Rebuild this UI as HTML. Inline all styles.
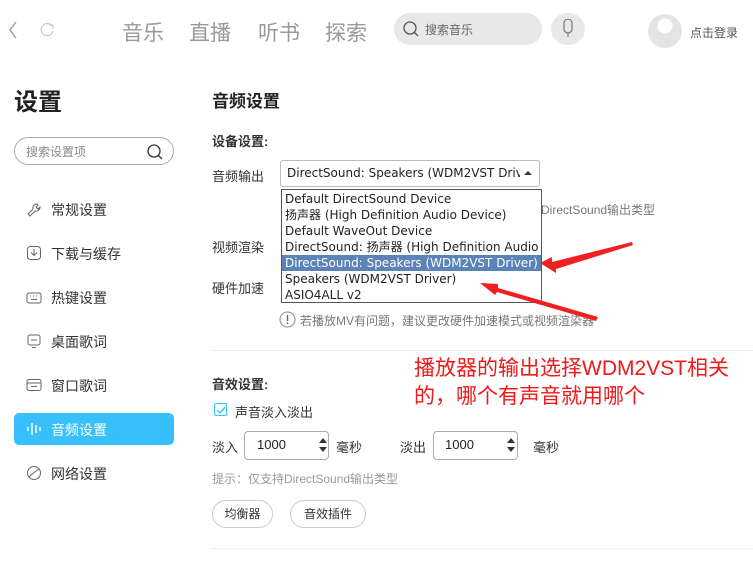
<!DOCTYPE html>
<html><head><meta charset="utf-8"><style>
*{margin:0;padding:0;box-sizing:border-box}
body{width:753px;height:573px;background:#fff;position:relative;overflow:hidden;font-family:"Liberation Sans","Noto Sans CJK SC",sans-serif;color:#333}
.a{position:absolute;white-space:nowrap}
.nav{font-size:21px;color:#999;top:17px}
.menu{left:51px;font-size:14px;color:#333}
.ic{left:26px;width:16px;height:16px}
.lbl{font-size:13px;color:#333}
.dd div{height:16px;line-height:16px;padding-left:3px;font-size:12px;color:#222;font-family:"DejaVu Sans","Noto Sans CJK SC",sans-serif;overflow:hidden}
</style></head><body>
<svg class="a" style="left:6px;top:20px" width="14" height="20"><path d="M10 2 L4 10 L10 18" stroke="#999" fill="none" stroke-width="1.3"/></svg>
<svg class="a" style="left:38px;top:21px" width="18" height="18"><path d="M14 5 A6 6 0 1 0 15 10" stroke="#ccc" fill="none" stroke-width="1.3"/><path d="M11 4 L15 4 L15 8" stroke="#ccc" fill="none" stroke-width="1.3"/></svg>
<div class="a nav" style="left:122px">音乐</div>
<div class="a nav" style="left:189px">直播</div>
<div class="a nav" style="left:258px">听书</div>
<div class="a nav" style="left:325px">探索</div>
<div class="a" style="left:394px;top:13px;width:148px;height:32px;border-radius:16px;background:#e8e8e8"></div>
<svg class="a" style="left:402px;top:20px" width="18" height="18"><circle cx="8" cy="8" r="6" stroke="#555" fill="none" stroke-width="1.3"/><path d="M12 12 L16 16" stroke="#555" stroke-width="1.3"/></svg>
<div class="a" style="left:425px;top:21px;font-size:12px;color:#666">搜索音乐</div>
<div class="a" style="left:551px;top:13px;width:34px;height:32px;border-radius:16px;background:#e8e8e8"></div>
<svg class="a" style="left:560px;top:19px" width="16" height="20"><path d="M4 4 a4 4 0 0 1 8 0 v6 a4 4 0 0 1 -8 0 z" stroke="#777" fill="none" stroke-width="1.2"/><path d="M8 14 v4" stroke="#777"/></svg>
<div class="a" style="left:648px;top:14px;width:34px;height:34px;border-radius:50%;background:radial-gradient(circle at 50% 35%,#fff 0 7px,#e4e4e4 8px)"></div>
<div class="a" style="left:690px;top:24px;font-size:12px;color:#555">点击登录</div>
<div class="a" style="left:14px;top:82px;font-size:24px;font-weight:bold;color:#222">设置</div>
<div class="a" style="left:14px;top:137px;width:160px;height:28px;border:1px solid #aaa;border-radius:14px"></div>
<div class="a" style="left:26px;top:143px;font-size:12px;color:#888">搜索设置项</div>
<svg class="a" style="left:146px;top:143px" width="18" height="18"><circle cx="8" cy="8" r="6" stroke="#333" fill="none" stroke-width="1.3"/><path d="M12 12 L16 16" stroke="#333" stroke-width="1.3"/></svg>
<svg class="a ic" style="top:202px" viewBox="0 0 16 16"><path d="M11 2 a4 4 0 0 0 -4 5 L2 12 L4 14 L9 9 a4 4 0 0 0 5 -4 L12 7 L10 5 L12 3z" stroke="#666" fill="none"/></svg>
<div class="a menu" style="top:200px">常规设置</div>
<svg class="a ic" style="top:245px" viewBox="0 0 16 16"><rect x="1.5" y="1.5" width="13" height="13" rx="3" stroke="#666" fill="none"/><path d="M8 4 v6 M5 7.5 L8 10.5 L11 7.5" stroke="#666" fill="none"/></svg>
<div class="a menu" style="top:244px">下载与缓存</div>
<svg class="a ic" style="top:290px" viewBox="0 0 16 16"><rect x="1" y="3" width="14" height="10" rx="2" stroke="#666" fill="none"/><path d="M4 6h1M7 6h1M10 6h1M5 9.5h6" stroke="#666"/></svg>
<div class="a menu" style="top:288px">热键设置</div>
<svg class="a ic" style="top:333px" viewBox="0 0 16 16"><rect x="2" y="2" width="12" height="10" rx="2" stroke="#666" fill="none"/><path d="M5 7h6M6 14.5h4" stroke="#666"/></svg>
<div class="a menu" style="top:332px">桌面歌词</div>
<svg class="a ic" style="top:377px" viewBox="0 0 16 16"><rect x="1" y="2.5" width="14" height="11" rx="2" stroke="#666" fill="none"/><path d="M1 6h14M5 9.5h6" stroke="#666"/></svg>
<div class="a menu" style="top:376px">窗口歌词</div>
<div class="a" style="left:14px;top:413px;width:160px;height:32px;border-radius:5px;background:#37c0fb"></div>
<svg class="a ic" style="top:421px" viewBox="0 0 16 16"><path d="M2 6v4M6 2v12M10 4v8M14 6v4" stroke="#fff" stroke-width="1.4"/></svg>
<div class="a menu" style="top:420px;color:#fff">音频设置</div>
<svg class="a ic" style="top:465px" viewBox="0 0 16 16"><circle cx="8" cy="8" r="6.5" stroke="#666" fill="none"/><path d="M3 12 C6 9 10 6 13 4" stroke="#666" fill="none"/></svg>
<div class="a menu" style="top:464px">网络设置</div>
<div class="a" style="left:212px;top:87px;font-size:17px;font-weight:bold;color:#222">音频设置</div>
<div class="a" style="left:212px;top:131px;font-size:13px;font-weight:bold;color:#333">设备设置:</div>
<div class="a lbl" style="left:212px;top:166px">音频输出</div>
<div class="a" style="left:280px;top:160px;width:260px;height:27px;border:1px solid #bbb;border-radius:3px;background:#fff"></div>
<div class="a" style="left:287px;top:166px;font-size:12px;color:#222;width:233px;overflow:hidden;font-family:'DejaVu Sans',sans-serif">DirectSound: Speakers (WDM2VST Driver)</div>
<svg class="a" style="left:524px;top:170px" width="8" height="6"><path d="M0 5 L4 1 L8 5z" fill="#333"/></svg>
<div class="a" style="left:541px;top:201px;font-size:12px;color:#777">DirectSound输出类型</div>
<div class="a lbl" style="left:212px;top:237px">视频渲染</div>
<div class="a lbl" style="left:212px;top:278px">硬件加速</div>
<svg class="a" style="left:279px;top:311px" width="17" height="17"><circle cx="8.5" cy="8.5" r="7.5" stroke="#888" fill="none"/><path d="M8.5 4v6M8.5 11.5v1.5" stroke="#666" stroke-width="1.4"/></svg>
<div class="a" style="left:300px;top:312px;font-size:12px;color:#777">若播放MV有问题，建议更改硬件加速模式或视频渲染器</div>
<div class="a dd" style="left:281px;top:189px;width:261px;height:114px;border:1px solid #555;background:#fff;padding-top:1px">
<div>Default DirectSound Device</div>
<div>扬声器 (High Definition Audio Device)</div>
<div>Default WaveOut Device</div>
<div>DirectSound: 扬声器 (High Definition Audio D</div>
<div style="background:#5b83b8;color:#fff">DirectSound: Speakers (WDM2VST Driver)</div>
<div>Speakers (WDM2VST Driver)</div>
<div>ASIO4ALL v2</div>
</div>
<svg class="a" style="left:470px;top:235px" width="170" height="95"><path d="M82 27 L162 7 L163 10 L86 34 L86 38 L70 28 L82 22z" fill="#f02020"/><path d="M128 82 L28 53 L28 49 L10 48 L25 60 L27 57 L126 86z" fill="#f02020"/></svg>
<div class="a" style="left:212px;top:350px;width:541px;height:1px;background:#eee"></div>
<div class="a" style="left:414px;top:355px;font-size:21px;color:#f01818;line-height:28px">播放器的输出选择WDM2VST相关<br>的，哪个有声音就用哪个</div>
<div class="a" style="left:212px;top:374px;font-size:13px;font-weight:bold;color:#333">音效设置:</div>
<div class="a" style="left:214px;top:403px;width:13px;height:13px;border:1px solid #37c0fb;border-radius:2px"></div>
<svg class="a" style="left:215px;top:404px" width="12" height="12"><path d="M2 6 L5 9 L10 3" stroke="#37c0fb" fill="none" stroke-width="1.4"/></svg>
<div class="a lbl" style="left:235px;top:402px">声音淡入淡出</div>
<div class="a lbl" style="left:212px;top:437px">淡入</div>
<div class="a" style="left:244px;top:431px;width:85px;height:29px;border:1px solid #aaa;border-radius:4px"></div>
<div class="a" style="left:257px;top:437px;font-size:13px;color:#222">1000</div>
<svg class="a" style="left:319px;top:437px" width="8" height="16"><path d="M0 6 L4 1 L8 6z M0 10 L4 15 L8 10z" fill="#333"/></svg>
<div class="a lbl" style="left:336px;top:437px">毫秒</div>
<div class="a lbl" style="left:400px;top:437px">淡出</div>
<div class="a" style="left:433px;top:431px;width:85px;height:29px;border:1px solid #aaa;border-radius:4px"></div>
<div class="a" style="left:445px;top:437px;font-size:13px;color:#222">1000</div>
<svg class="a" style="left:507px;top:437px" width="8" height="16"><path d="M0 6 L4 1 L8 6z M0 10 L4 15 L8 10z" fill="#333"/></svg>
<div class="a lbl" style="left:533px;top:437px">毫秒</div>
<div class="a" style="left:212px;top:470px;font-size:12px;color:#999">提示：仅支持DirectSound输出类型</div>
<div class="a" style="left:212px;top:500px;width:61px;height:28px;border:1px solid #ccc;border-radius:14px;font-size:12px;text-align:center;line-height:26px">均衡器</div>
<div class="a" style="left:290px;top:500px;width:76px;height:28px;border:1px solid #ccc;border-radius:14px;font-size:12px;text-align:center;line-height:26px">音效插件</div>
<div class="a" style="left:212px;top:548px;width:541px;height:1px;background:#eee"></div>
</body></html>
